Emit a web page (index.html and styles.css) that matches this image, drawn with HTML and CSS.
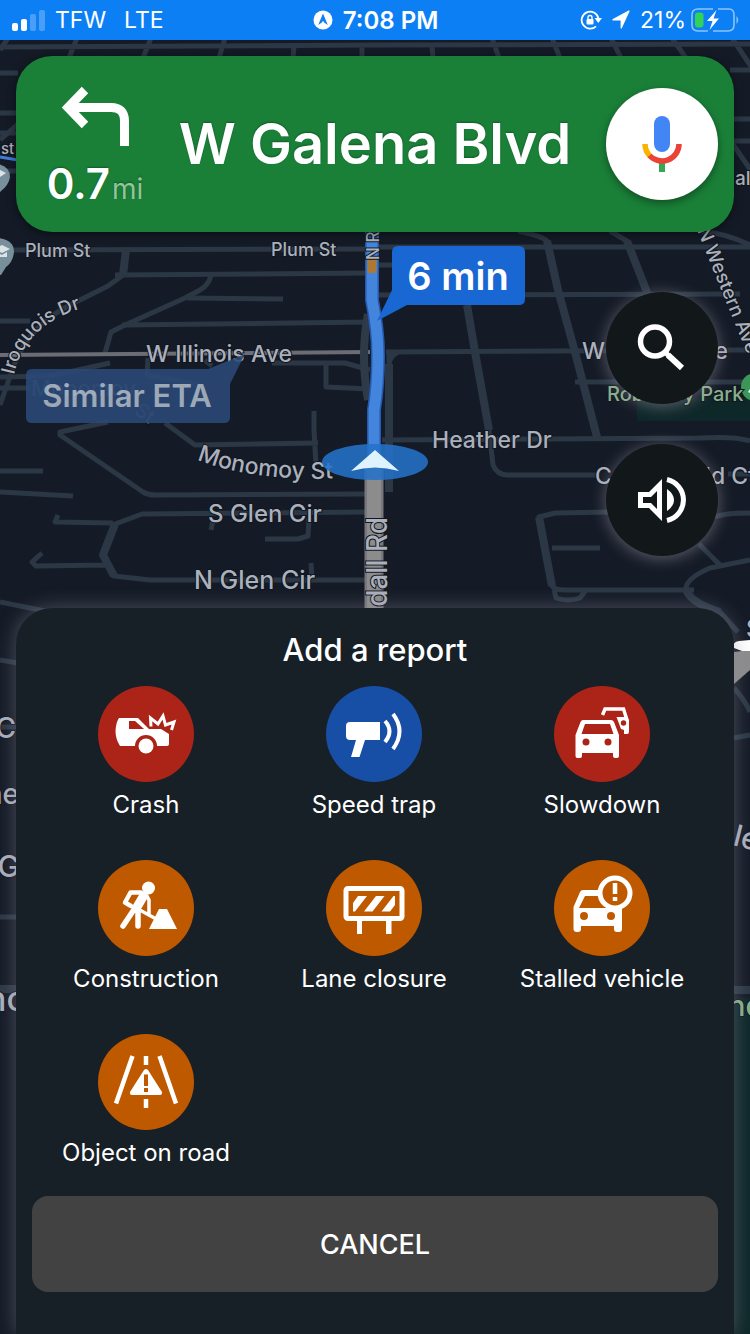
FILE: index.html
```html
<!DOCTYPE html>
<html lang="en">
<head>
    <meta charset="utf-8">
    <meta name="viewport" content="width=device-width">
    <title>Add a report</title>
    <link rel="stylesheet" href="styles.css">
</head>
<body>
    <header class="status-bar">
        <div class="status-left">
            <svg class="signal" viewBox="0 0 34 22" width="34" height="22">
                <rect x="0" y="14" width="6" height="8" rx="2"/>
                <rect x="9" y="10" width="6" height="12" rx="2"/>
                <rect class="faded" x="18" y="5" width="6" height="17" rx="2"/>
                <rect class="faded" x="27" y="1" width="6" height="21" rx="2"/>
            </svg>
            <span>TFW</span>
            <span class="network">LTE</span>
        </div>
        <div class="status-time">
            <svg viewBox="0 0 20 20" width="20" height="20">
                <circle cx="10" cy="10" r="9.5" fill="#fff"/>
                <path d="M10 3.5L14.8 15L10 11.8L5.2 15Z" fill="#0d7ff5"/>
                <path d="M10 11V16" stroke="#fff" stroke-width="1"/>
            </svg>
            <span>7:08 PM</span>
        </div>
        <div class="status-right">
            <svg viewBox="0 0 22 20" width="22" height="20" fill="none" stroke="#fff" stroke-width="1.8">
                <path d="M18.4 8A8.5 8.5 0 1 0 16 16.3"/>
                <path d="M14.5 8H22L18.3 13Z" fill="#fff" stroke="none"/>
                <rect x="6.5" y="9" width="7" height="5.5" rx="1" fill="#fff" stroke="none"/>
                <path d="M8 9V7.5A2 2 0 0 1 12 7.5V9" stroke-width="1.4"/>
            </svg>
            <svg class="locate" viewBox="0 0 20 20" width="20" height="20">
                <path d="M18.6 1.2L10.8 18.2Q10 19 9.6 18V10.5H1.8Q.6 10 1.8 9L17.6 .6Q18.8 .2 18.6 1.2Z" fill="#fff"/>
            </svg>
            <span>21%</span>
            <svg class="battery" viewBox="0 0 48 24" width="48" height="24">
                <path d="M22 1H7Q1 1 1 7V17Q1 23 7 23H17M27 1H38Q43 1 43 7V17Q43 23 37 23H22" fill="none" stroke="#8dc3fb" stroke-width="1.6"/>
                <path d="M45.5 8Q49 12 45.5 16Z" fill="#8dc3fb"/>
                <rect x="4" y="4.5" width="8.5" height="15" rx="3" fill="#32d158"/>
                <path d="M25.5 2L16 13H21.5L18.5 22L28 10.5H22.5Z" fill="#fff"/>
            </svg>
        </div>
    </header>

    <main class="navigation">
        <svg class="map" viewBox="0 40 750 1294" preserveAspectRatio="xMidYMin slice">
            <!-- park -->
            <rect class="park" x="637" y="398" width="113" height="23"/>
            <rect class="park" x="734" y="998" width="16" height="336"/>

            <!-- streets -->
            <g class="streets">
                <path d="M0 47L375 45L750 44M8 38L0 50M77 38L69 58M151 38L143 58M225 38L219 58M294 46L293 58M362 46V58M432 46L433 58M492 38L499 58M552 38L560 58M611 38L621 58M672 38L686 58M732 38L752 68"/>
                <path d="M0 73H18M0 113H18M0 133H18M0 140L18 124M0 171H18M730 70H750M730 119H750M730 141H750M732 143L752 172"/>
                <path d="M10 250L370 249M115 275L370 273M187 298L283 299M122 325L370 322M0 321H30"/>
                <path d="M126 250L123 275L108 286L70 305Q30 325 14 365L0 405"/>
                <path d="M211 275Q209 285 200 290L185 298L125 325L111 332L105 353"/>
                <path d="M0 377L50 376L110 363M0 388H30M148 358L147 375L200 385M205 360L212 366M272 363L345 363L370 370M326 363V387L370 389M314 411V430L316 465M165 423L195 445L318 443"/>
                <path d="M108 422L60 432V435L143 492Q148 495 155 495L370 494M0 471H43M0 492L73 496"/>
                <path d="M370 512L142 514L115 524L103 555L114 576L150 580H370M113 523L55 522L58 515M108 565L36 566L32 562L42 553M213 520L211 530M309 518L308 536L298 539H265M311 563L312 578"/>
                <path d="M375 265H400M375 247H750M375 295L740 294M386 352L750 350M575 382H750M382 440L700 438Q735 436 750 441"/>
                <path d="M518 231Q542 236 547 241L558 290L575 352L597 437M610 231L627 241L650 300L664 340M467 305L475 352L489 430L493 465Q497 475 508 475H600M389 354V492M398 352Q390 356 389 364M700 231Q725 233 750 245"/>
                <path d="M612 512L555 513L539 517L552 586Q555 590 565 590H694M552 548H600M554 590L556 598Q568 602 580 598L586 590M750 560L710 568Q687 578 686 588Q688 602 720 612L738 632M699 544L721 566M715 517Q724 513 750 513M728 474H750"/>
                <path d="M0 602L55 613M0 660L18 663M0 727H18M0 917H18M734 688Q745 700 750 712M734 738L750 735"/>
                <path class="wide" d="M0 989H18M734 990H750M539 517L552 586M115 524L103 555L114 576M126 250L123 275M547 241L558 290L575 352L597 437M627 241L650 300M467 305L475 352L489 430M389 364V492M686 588Q688 602 720 612"/>
            </g>
            <path class="avenue" d="M0 355L370 352"/>
            <path class="blue-street" d="M0 157L18 160"/>
            <path d="M734 652L750 650V670L734 684Z" fill="#8c8c8c"/>
            <path d="M750 640L739 641Q732 642 734 648L742 651H750Z" fill="#fff"/>

            <!-- Randall Rd and the route on it -->
            <path d="M374 465V612" stroke="#77777c" stroke-width="19"/>
            <path d="M374 465V612" stroke="#8c8c8c" stroke-width="14"/>
            <path d="M368 314Q360 355 368 400" fill="none" stroke="#2e3a47" stroke-width="8"/>
            <path class="route-edge" d="M372 230V300Q378 330 378 355Q378 385 374 410V465"/>
            <path class="route" d="M372 230V300Q378 330 378 355Q378 385 374 410V465"/>
            <path d="M372 258V273" stroke="#ad7734" stroke-width="9"/>
            <path d="M372 231V239" stroke="#1b4f9c" stroke-width="10"/>

            <!-- place pins -->
            <g class="pin">
                <path d="M-12 163Q10 163 10 177Q9 185 0 192Z"/>
                <path d="M-12 238Q14 236 14 252Q13 262 6 267L1 275H-12Z"/>
            </g>
            <path d="M-6 249L2 245L10 249L2 253ZM-4 252L2 255L7 252V257H-4ZM-6 173L0 170L6 173L0 177ZM3 174V180" fill="#dce4e8"/>
            <circle cx="755" cy="387" r="14" fill="#3c9657"/>
            <path d="M748 392L752 386V394Z" fill="#dff"/>

            <!-- street names -->
            <path id="iroquois" d="M14 375Q26 318 100 304" fill="none"/>
            <path id="monomoy" d="M197 460Q255 482 345 478" fill="none"/>
            <g class="names">
                <text x="1" y="154" font-size="15">st</text>
                <text x="735" y="185" font-size="19">al</text>
                <text x="25" y="257" font-size="18">Plum St</text>
                <text x="271" y="256" font-size="18">Plum St</text>
                <text font-size="19"><textPath href="#iroquois">Iroquois Dr</textPath></text>
                <text x="146" y="362" font-size="23">W Illinois Ave</text>
                <text font-size="23"><textPath href="#monomoy">Monomoy St</textPath></text>
                <text x="208" y="522" font-size="24">S Glen Cir</text>
                <text x="194" y="589" font-size="25">N Glen Cir</text>
                <text x="432" y="448" font-size="23">Heather Dr</text>
                <text x="582" y="359" font-size="23">W Illinois Ave</text>
                <text x="595" y="484" font-size="23">Copperfield Ct</text>
                <text x="0" y="0" font-size="19" transform="translate(697 230) rotate(68)">N Western Ave</text>
                <text x="0" y="0" font-size="17" transform="translate(379 260) rotate(-90)">N R</text>
                <text x="0" y="0" font-size="28" text-anchor="end" transform="translate(387 517) rotate(-90)">N Randall Rd</text>
                <text x="16" y="738" font-size="28" text-anchor="end">C</text>
                <text x="19" y="804" font-size="28" text-anchor="end">ne</text>
                <text x="20" y="877" font-size="30" text-anchor="end">G</text>
                <text x="26" y="1011" font-size="34" text-anchor="end">nc</text>
                <text x="746" y="637" font-size="24">S</text>
                <text x="0" y="0" font-size="30" transform="translate(732 845) rotate(14)">le</text>
                <text class="park-name" x="607" y="401" font-size="20">Robinsey Park</text>
                <text class="park-name" x="728" y="1016" font-size="29">nd</text>
                <text class="hidden-name" x="31" y="396" font-size="22">Monomoy</text>
                <text class="hidden-name" x="0" y="0" font-size="20" transform="translate(133 413) rotate(35)">St</text>
            </g>

            <!-- route callouts -->
            <g opacity=".88">
                <path d="M32 369H208L245 354L230 384V417Q230 423 224 423H32Q26 423 26 417V375Q26 369 32 369Z" fill="#2b4a78"/>
                <text class="callout" x="127" y="407" font-size="31" fill="#b0bccb">Similar ETA</text>
            </g>
            <path d="M398 246H519Q525 246 525 252V299Q525 305 519 305H407L377 321L392 290V252Q392 246 398 246Z" fill="#1967d2"/>
            <text class="callout" x="458" y="290" font-size="38" fill="#fff">6 min</text>

            <!-- current position -->
            <ellipse cx="375" cy="462" rx="53" ry="18" fill="#2472c8" fill-opacity=".88"/>
            <path d="M375 450L399 471Q375 464 351 471Z" fill="#dff3ff"/>
        </svg>

        <section class="directions">
            <div class="turn">
                <svg viewBox="60 84 72 64" width="72" height="64" fill="none" stroke="#fff" stroke-width="9">
                    <path d="M72 107.5H112Q125.5 107.5 125.5 121V146"/>
                    <path d="M86 90L69 107.500L86 125" stroke-linejoin="miter"/>
                </svg>
                <p class="distance">0.7<span class="unit">mi</span></p>
            </div>
            <h1 class="road">W Galena Blvd</h1>
            <button class="mic" type="button" aria-label="Voice">
                <svg viewBox="0 0 112 112" width="112" height="112" fill="none" stroke-width="5.5">
                    <rect x="48" y="28" width="16" height="36" rx="8" fill="#4285f4"/>
                    <path d="M56 74V84" stroke="#34a853" stroke-width="6"/>
                    <path d="M39 56A17 17 0 0 0 44 68" stroke="#fbb300"/>
                    <path d="M43.5 67.5A17 17 0 0 0 73 56" stroke="#ea4335"/>
                </svg>
            </button>
        </section>

        <div class="map-controls">
            <button class="round-button" type="button" aria-label="Search">
                <svg viewBox="0 0 112 112" width="112" height="112" fill="none" stroke="#fff" stroke-width="5.5">
                    <circle cx="49" cy="49.5" r="14.5"/>
                    <path d="M62 63L76 76" stroke-width="6"/>
                    <path d="M59 60L64 65" stroke-width="5"/>
                </svg>
            </button>
            <button class="round-button" type="button" aria-label="Sound">
                <svg viewBox="0 0 112 112" width="112" height="112" fill="#fff">
                    <path fill-rule="evenodd" d="M32 48H43L56 35V77L43 64H32ZM37 53V59H45L51 65V47L45 53Z"/>
                    <path d="M61 45Q68 50 68 56T61 67Z"/>
                    <path d="M61 35.5A21 21 0 0 1 61 76.5" fill="none" stroke="#fff" stroke-width="5"/>
                </svg>
            </button>
        </div>

        <section class="report">
            <h2 class="report-title">Add a report</h2>
            <div class="report-types">
                <button class="report-type" type="button">
                    <svg class="report-icon red" viewBox="0 0 96 96">
                        <path fill-rule="evenodd" d="M21 32H40L51 43H63L71 48V58Q71 60 69 60H59A11 11 0 0 0 37 60H22Q17.5 53 17.5 45Q18 36 21 32ZM31 35V43H46L37 35Z"/>
                        <circle cx="48" cy="60" r="7.5"/>
                        <path class="line" stroke-width="3" d="M53 40.5L52.5 32L60 38L65 30L67.5 39L76 36L73.5 44"/>
                    </svg>
                    <span>Crash</span>
                </button>
                <button class="report-type" type="button">
                    <svg class="report-icon blue" viewBox="0 0 96 96">
                        <path d="M24 36H54V54H39L33.5 71H25L30 54H24Q20 54 20 50V40Q20 36 24 36Z"/>
                        <path class="line" stroke-width="4" d="M59 35Q68 45 59 56M67 28Q80 45 67 63"/>
                    </svg>
                    <span>Speed trap</span>
                </button>
                <button class="report-type" type="button">
                    <svg class="report-icon red" viewBox="0 0 96 96">
                        <path fill-rule="evenodd" d="M29 34H57Q59 34 60 36L65 49V70Q65 72 63 72H61Q59 72 59 70V67H28V70Q28 72 26 72H23.5Q21.5 72 21.5 70V49L26.5 36Q27.5 34 29 34ZM31 38L27.5 48H59.5L56 38Z"/>
                        <path class="line" stroke-width="3.5" d="M48.5 29L51 23H69.5L73 34"/>
                        <path d="M62.5 31H73L75 34V46Q75 48 73 48H70V44L67 43Z"/>
                        <g class="hole"><circle cx="32" cy="56" r="3.5"/><circle cx="54" cy="56" r="3.5"/><circle cx="69.5" cy="37" r="2.7"/></g>
                    </svg>
                    <span>Slowdown</span>
                </button>
                <button class="report-type" type="button">
                    <svg class="report-icon orange" viewBox="0 0 96 96">
                        <circle cx="50.5" cy="28" r="6.5"/>
                        <path class="line round" stroke-width="4.5" d="M43 32.5H32.5L27 42.5L33 46"/>
                        <path class="line round" stroke-width="9" d="M45.5 36L39 47"/>
                        <path class="line round" stroke-width="5.5" d="M37 48L25 66M40 48V66"/>
                        <path class="line round" stroke-width="3.5" d="M49 36L51 40V54M40 49L60 60"/>
                        <path d="M61 49H69L79 69H51Z"/>
                    </svg>
                    <span>Construction</span>
                </button>
                <button class="report-type" type="button">
                    <svg class="report-icon orange" viewBox="0 0 96 96">
                        <rect class="line" x="20" y="28.5" width="56" height="30" rx="2" stroke-width="5"/>
                        <path d="M31 60H36V74H31ZM60 60H65.5V74H60Z"/>
                        <path d="M27 43L32 36H41L29 51.5H27ZM38 51.5H46.5L58.5 36H50ZM55.5 51.5H64L69 45V36H67.5Z"/>
                    </svg>
                    <span>Lane closure</span>
                </button>
                <button class="report-type" type="button">
                    <svg class="report-icon orange" viewBox="0 0 96 96">
                        <path fill-rule="evenodd" d="M29 30H48V36H31L25 48H68V69Q68 72 65 72H63Q60 72 60 69V66H27V69Q27 72 24 72H23Q19.5 72 19.5 69V47L26 32Q27 30 29 30Z"/>
                        <g class="hole"><circle cx="30" cy="56" r="4"/><circle cx="57" cy="56" r="4"/><circle cx="61" cy="33" r="15"/></g>
                        <circle class="line" cx="61" cy="33" r="15" stroke-width="5"/>
                        <path class="line" stroke-width="4.5" d="M61 23V34M61 37V41"/>
                    </svg>
                    <span>Stalled vehicle</span>
                </button>
                <button class="report-type" type="button">
                    <svg class="report-icon orange" viewBox="0 0 96 96">
                        <path class="line" stroke-width="4.5" d="M34.5 22L18 69.5M61.5 22L78 69.5M48 22V31M48 65V74"/>
                        <path d="M46 36Q48 34 50 36L64 58Q64.5 61 62 61H34Q31.5 61 32 58Z"/>
                        <path class="hole" d="M46 40.5H50V52H46ZM46 54H50V58H46Z"/>
                    </svg>
                    <span>Object on road</span>
                </button>
            </div>
            <button class="cancel" type="button">CANCEL</button>
        </section>
    </main>
</body>
</html>
```
FILE: styles.css
```css
* {
    box-sizing: border-box;
}
body {
    margin: 0;
    min-height: 100vh;
    display: flex;
    flex-direction: column;
    background-color: #141b26;
    color: white;
    font-family: Inter, Roboto, sans-serif;
}
button {
    padding: 0;
    border: none;
    color: white;
    font-family: inherit;
    cursor: pointer;
}
svg {
    display: block;
}

/* status bar */
.status-bar {
    display: grid;
    grid-template-columns: 1fr auto 1fr;
    align-items: center;
    height: 40px;
    padding: 0 11px 0 12px;
    background-color: #0d7ff5;
    font-size: 23px;
}
.status-left, .status-time, .status-right {
    display: flex;
    align-items: center;
}
.status-left {
    gap: 9px;
}
.network {
    margin-left: 9px;
}
.signal {
    fill: white;
}
.signal .faded {
    opacity: 0.25;
}
.status-time {
    gap: 10px;
    font-size: 24px;
    font-weight: 600;
}
.status-right {
    justify-content: flex-end;
    gap: 5px;
}
.locate {
    margin: 0 4px;
}

/* map */
.navigation {
    position: relative;
    flex: 1;
    display: flex;
    flex-direction: column;
    overflow: hidden;
}
.map {
    position: absolute;
    top: 0;
    left: 0;
    width: 100%;
    height: 100%;
}
.streets {
    fill: none;
    stroke: #2b3744;
    stroke-width: 5;
    stroke-linejoin: round;
}
.streets .wide {
    stroke-width: 8;
}
.avenue {
    stroke: #6c6d74;
    stroke-width: 4;
}
.blue-street {
    stroke: #3f7cd8;
    stroke-width: 3;
}
.route, .route-edge {
    fill: none;
    stroke: #4384dc;
    stroke-width: 11;
    stroke-linejoin: round;
}
.route-edge {
    stroke: #2359b0;
    stroke-width: 14;
}
.park {
    fill: #0e2729;
}
.pin {
    fill: #78909c;
}
.names {
    fill: #abb0bd;
    stroke: #11161e;
    stroke-width: 2;
    paint-order: stroke;
    font-weight: 500;
}
.names .park-name {
    fill: #87b08b;
}
.names .hidden-name {
    fill: #4a5262;
}
.callout {
    font-weight: 600;
    text-anchor: middle;
}

/* next turn */
.directions {
    position: relative;
    display: flex;
    align-items: center;
    height: 176px;
    margin: 16px 16px 0;
    padding-right: 16px;
    border-radius: 36px;
    background-color: #1a8038;
    box-shadow: 0 2px 8px rgba(0, 0, 0, 0.5);
    text-shadow: 0 -1px 2px rgba(0, 0, 0, 0.3);
}
.turn {
    display: flex;
    flex-direction: column;
    align-items: center;
    width: 128px;
    padding: 12px 0 0 30px;
}
.distance {
    margin: 8px 0 0;
    font-size: 42px;
    line-height: 56px;
    font-weight: 600;
    white-space: nowrap;
}
.unit {
    margin-left: 2px;
    color: #94c39c;
    font-size: 28px;
    font-weight: 400;
}
.road {
    flex: 1;
    margin: 0;
    font-size: 56px;
    font-weight: 600;
    text-align: center;
    white-space: nowrap;
}
.mic, .round-button {
    width: 112px;
    height: 112px;
    border-radius: 50%;
}
.mic {
    background-color: white;
    box-shadow: 0 3px 8px rgba(0, 0, 0, 0.4);
}
.map-controls {
    position: relative;
    display: flex;
    flex-direction: column;
    align-self: flex-end;
    gap: 40px;
    margin: 60px 32px 52px;
    margin-right: 32px;
}
.round-button {
    background-color: #12171a;
    box-shadow: 0 2px 16px rgba(190, 180, 200, 0.45);
}

/* report sheet */
.report {
    position: relative;
    flex: 1;
    margin: 0 16px;
    padding: 22px 16px 42px;
    border-radius: 36px 36px 0 0;
    background-color: #182027;
    box-shadow: 0 0 20px rgba(150, 145, 165, 0.45);
}
.report-title {
    margin: 0 0 16px;
    font-size: 31px;
    line-height: 40px;
    font-weight: 500;
    text-align: center;
}
.report-types {
    display: grid;
    grid-template-columns: repeat(3, 1fr);
    row-gap: 40px;
    margin-right: 2px;
}
.report-type {
    display: flex;
    flex-direction: column;
    align-items: center;
    gap: 8px;
    background: none;
    font-size: 24px;
    line-height: 30px;
}
.report-icon {
    width: 96px;
    height: 96px;
    border-radius: 50%;
    fill: white;
}
.report-icon .line {
    fill: none;
    stroke: white;
}
.report-icon .round {
    stroke-linecap: round;
    stroke-linejoin: round;
}
.red {
    background-color: #ab2417;
}
.blue {
    background-color: #174ea6;
}
.orange {
    background-color: #bf5900;
}
.red .hole {
    fill: #ab2417;
}
.orange .hole {
    fill: #bf5900;
}
.cancel {
    display: block;
    width: 100%;
    height: 96px;
    margin-top: 28px;
    border-radius: 16px;
    background-color: #424242;
    font-size: 27px;
    font-weight: 500;
}
```
